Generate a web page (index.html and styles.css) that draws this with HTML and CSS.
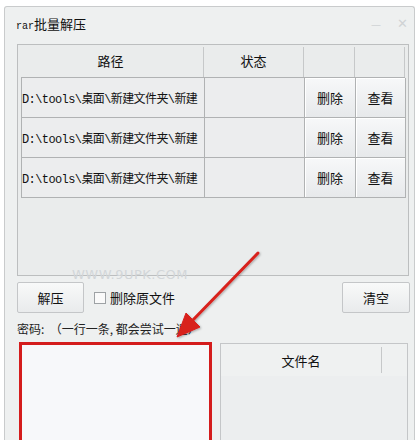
FILE: index.html
```html
<!DOCTYPE html>
<html>
<head>
<meta charset="utf-8">
<title>rar批量解压</title>
<link rel="stylesheet" href="styles.css">
</head>
<body>
<div class="window">
  <div class="titlebar">
    <span class="title"><span class="asc">rar</span>批量解压</span>
    <span class="winbtns"><span class="min">&#8212;</span><span class="close">&#10005;</span></span>
  </div>

  <div class="content">
    <!-- file list -->
    <div class="list">
      <div class="head">
        <span>路径</span>
        <span>状态</span>
        <span></span>
        <span></span>
      </div>
      <div class="rows">
        <div class="row">
          <span class="path">D:\tools\桌面\新建文件夹\新建</span>
          <span class="state"></span>
          <span class="btn">删除</span>
          <span class="btn">查看</span>
        </div>
        <div class="row">
          <span class="path">D:\tools\桌面\新建文件夹\新建</span>
          <span class="state"></span>
          <span class="btn">删除</span>
          <span class="btn">查看</span>
        </div>
        <div class="row">
          <span class="path">D:\tools\桌面\新建文件夹\新建</span>
          <span class="state"></span>
          <span class="btn">删除</span>
          <span class="btn">查看</span>
        </div>
      </div>
      <span class="mark">WWW.9UPK.COM</span>
    </div>

    <div class="actions">
      <button class="button">解压</button>
      <label class="check"><span class="box"></span>删除原文件</label>
      <button class="button clear">清空</button>
    </div>

    <div class="label">密码: &nbsp;（一行一条, 都会尝试一遍）</div>

    <div class="bottom">
      <div class="password"></div>
      <div class="files">
        <div class="fhead"><span>文件名</span><span></span></div>
      </div>
    </div>
  </div>
</div>

<!-- red annotation arrow -->
<svg class="arrow" width="417" height="440" viewBox="0 0 417 440">
  <defs>
    <filter id="sh" x="-20%" y="-20%" width="140%" height="140%">
      <feDropShadow dx="1" dy="1" stdDeviation="1" flood-color="#000" flood-opacity="0.3"/>
    </filter>
  </defs>
  <g filter="url(#sh)" fill="#d8201c" stroke="#d8201c">
    <line x1="258" y1="253" x2="192" y2="321" stroke-width="3" stroke-linecap="round"/>
    <polygon points="177,337 186,313 200,327" stroke-width="1" stroke-linejoin="round"/>
  </g>
</svg>
</body>
</html>
```

FILE: styles.css
```css
* {box-sizing: border-box;}

body {
  margin: 0;
  background: #fff;
  height: 440px;
  overflow: hidden;
  font-family: "Noto Sans CJK SC", sans-serif;
  font-size: 12px;
  color: #111;
}

.window {
  margin: 6px 0 0 4px;
  width: 411px;
  height: 434px;
  border: 1px solid #c9cbcc;
  border-bottom: 0;
  border-radius: 3px 3px 0 0;
  background: #eef0f0;
}

.titlebar {
  height: 37px;
  display: flex;
  align-items: center;
  justify-content: space-between;
  padding: 0 6px 4px 11px;
}

.title {
  font-size: 13px;
}

.asc {
  font-family: "Liberation Mono", monospace;
  font-size: 10px;
}

.winbtns {
  display: flex;
  gap: 16px;
  color: #d0d3d5;
  font-family: "DejaVu Sans", sans-serif;
  font-size: 13px;
}

.min {
  font-size: 10px;
  padding-top: 3px;
}

.content {
  padding: 0 5px 0 12px;
}

/* list */
.list {
  position: relative;
  height: 232px;
  border: 1px solid #bcbebf;
  background: #eaecec;
}

.head {
  display: grid;
  grid-template-columns: 186px 100px 51px 50px;
  height: 32px;
}

.head span {
  display: flex;
  align-items: center;
  justify-content: center;
  font-size: 13px;
  border-right: 1px solid #c6c8c9;
  margin: 2px 0 0;
  padding-bottom: 4px;
}

.rows {
  margin: 0 3px;
  border-top: 1px solid #b0b2b3;
  border-left: 1px solid #b0b2b3;
}

.row {
  display: grid;
  grid-template-columns: 183px 100px 51px 50px;
  height: 40px;
}

.row span {
  display: flex;
  align-items: center;
  border-right: 1px solid #b0b2b3;
  border-bottom: 1px solid #b0b2b3;
}

.path {
  font-family: "Liberation Mono", "Noto Sans CJK SC", monospace;
  font-size: 12px;
  letter-spacing: -0.6px;
  white-space: nowrap;
  overflow: hidden;
  background: #ecedee;
}

.state {
  background: #ecedee;
}

.row .btn {
  justify-content: center;
  font-size: 13px;
  background: linear-gradient(#f7f8f9, #e7e9eb);
  box-shadow: inset 1px 1px 0 #fff;
}

.mark {
  position: absolute;
  left: 54px;
  bottom: -7px;
  font-family: "DejaVu Sans", sans-serif;
  font-size: 13px;
  letter-spacing: 0.5px;
  color: #d2d6d9;
}

/* actions */
.actions {
  display: flex;
  align-items: center;
  margin-top: 6px;
  height: 31px;
}

.button {
  width: 67px;
  height: 31px;
  border: 1px solid #c4c6c8;
  border-radius: 2px;
  background: linear-gradient(#f8f9f9, #e9ebec);
  font-family: "Noto Sans CJK SC", sans-serif;
  font-size: 13px;
  color: #111;
  padding: 0;
}

.clear {
  margin-left: auto;
  width: 68px;
  margin-right: -1px;
}

.check {
  display: flex;
  align-items: center;
  gap: 4px;
  margin-left: 10px;
  font-size: 13px;
}

.box {
  width: 12px;
  height: 12px;
  border: 1px solid #9ea2a5;
  background: #fafafa;
}

.label {
  margin-top: 6px;
  height: 20px;
  line-height: 20px;
  font-size: 12px;
  color: #222;
}

/* bottom */
.bottom {
  display: flex;
  gap: 8px;
  margin-top: 3px;
}

.password {
  margin-left: 2px;
  width: 193px;
  height: 100px;
  border: 3px solid #d41c1c;
  border-bottom: 0;
  background: #f7f8fa;
}

.files {
  margin-top: 1px;
  width: 188px;
  height: 99px;
  border: 1px solid #c4c6c8;
  border-bottom: 0;
  background: #eceeef;
}

.fhead {
  display: grid;
  grid-template-columns: 161px 1fr;
  height: 32px;
  background: #eff1f1;
}

.fhead span {
  display: flex;
  align-items: center;
  justify-content: center;
  font-size: 13px;
  border-right: 1px solid #c6c8c9;
  margin: 3px 0;
}

.fhead span:last-child {
  border: 0;
}

.arrow {
  position: absolute;
  left: 0;
  top: 0;
  pointer-events: none;
}
```
